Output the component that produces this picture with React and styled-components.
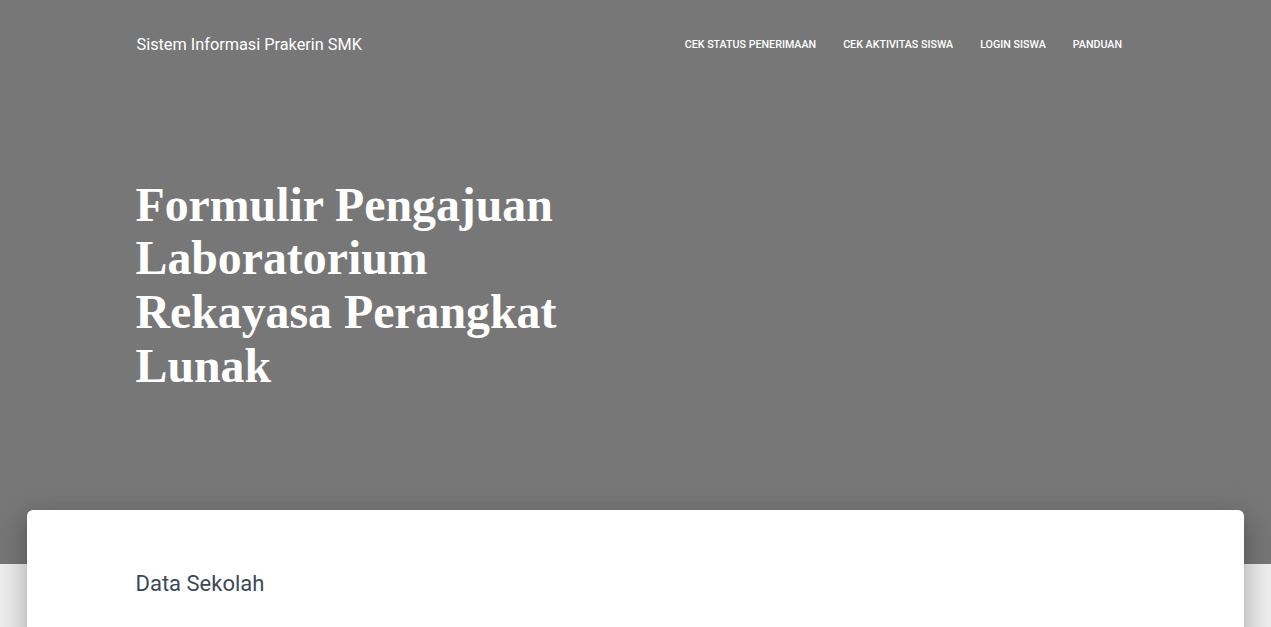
import React from "react";
import styled, { createGlobalStyle } from "styled-components";

const Global = createGlobalStyle`
  html, body { margin: 0; padding: 0; }
  body {
    font-family: Roboto, "Helvetica Neue", Arial, sans-serif;
    background: #eeeeee;
    color: #3c4858;
  }
  * { box-sizing: border-box; }
`;

const Header = styled.header`
  background: #777777;
  height: 564px;
`;

const Container = styled.div`
  width: 1030px;
  margin: 0 auto;
  padding: 0 15px;
`;

const NavBar = styled.nav`
  height: 90px;
  display: flex;
  align-items: center;
  justify-content: space-between;
`;

const Brand = styled.a`
  color: #fff;
  font-size: 16.3px;
  line-height: 30px;
  text-decoration: none;
  margin-left: 1px;
`;

const NavList = styled.ul`
  list-style: none;
  margin: 0;
  padding: 0;
  display: flex;
`;

const NavLink = styled.a`
  display: block;
  padding: 10px 13.5px;
  color: #fff;
  font-size: 10.7px;
  font-weight: 500;
  text-transform: uppercase;
  text-decoration: none;
  line-height: 20px;
`;

const Hero = styled.div`
  padding-top: 87.5px;
`;

const Title = styled.h1`
  margin: 0;
  max-width: 485px;
  color: #fff;
  font-family: "Liberation Serif", "Times New Roman", serif;
  font-weight: 700;
  font-size: 47.8px;
  line-height: 53.7px;
`;

const Main = styled.main`
  position: relative;
  margin: -54px 27px 0;
  background: #fff;
  border-radius: 6px;
  min-height: 200px;
  box-shadow: 0 16px 24px 2px rgba(0, 0, 0, 0.14),
    0 6px 30px 5px rgba(0, 0, 0, 0.12), 0 8px 10px -5px rgba(0, 0, 0, 0.2);
  padding-top: 59px;
`;

const SectionTitle = styled.h3`
  margin: 0;
  font-size: 22px;
  font-weight: 400;
  line-height: 30px;
  color: #3c4858;
`;

const links = ["Cek Status Penerimaan", "Cek Aktivitas Siswa", "Login Siswa", "Panduan"];

export default function App() {
  return (
    <>
      <Global />
      <Header>
        <Container>
          <NavBar>
            <Brand href="#">Sistem Informasi Prakerin SMK</Brand>
            <NavList>
              {links.map((l) => (
                <li key={l}>
                  <NavLink href="#">{l}</NavLink>
                </li>
              ))}
            </NavList>
          </NavBar>
          <Hero>
            <Title>Formulir Pengajuan Laboratorium Rekayasa Perangkat Lunak</Title>
          </Hero>
        </Container>
      </Header>
      <Main>
        <Container>
          <SectionTitle>Data Sekolah</SectionTitle>
        </Container>
      </Main>
    </>
  );
}
